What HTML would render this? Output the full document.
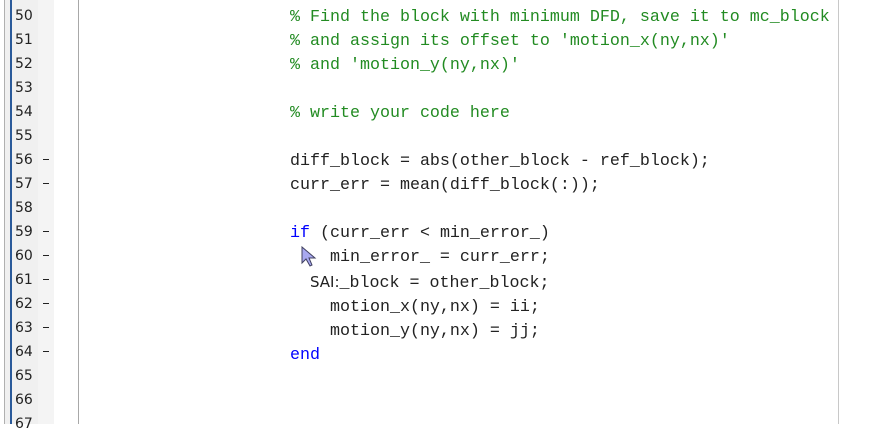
<!DOCTYPE html>
<html><head><style>
body{margin:0;width:893px;height:424px;overflow:hidden;background:#fff;position:relative;font-family:"Liberation Mono",monospace}
.g1{position:absolute;left:4px;top:0;width:34px;height:424px;background:#f0f0f0;border-left:1px solid #b0b0b0}
.g2{position:absolute;left:38px;top:0;width:16px;height:424px;background:#f4f4f4}
.blue{position:absolute;left:10px;top:0;width:2px;height:424px;background:#2a5a9a}
.vl{position:absolute;left:78px;top:0;width:1px;height:424px;background:#a8a8a8}
.vr{position:absolute;left:838px;top:0;width:1px;height:424px;background:#c8c8c8}
.n{position:absolute;left:15px;font:14px "DejaVu Sans",sans-serif;color:#222}
.d{position:absolute;left:43px;width:6px;height:1px;background:#222}
.c{position:absolute;left:290px;font-size:16.67px;white-space:pre;color:#222;line-height:24px}
.cm{color:#228b22}.k{color:#0000ff}
</style></head><body>
<div class="g1"></div><div class="g2"></div><div class="blue"></div><div class="vl"></div><div class="vr"></div>
<div class="n" style="top:8px">50</div><div class="n" style="top:32px">51</div><div class="n" style="top:56px">52</div><div class="n" style="top:80px">53</div><div class="n" style="top:104px">54</div><div class="n" style="top:128px">55</div><div class="n" style="top:152px">56</div><div class="n" style="top:176px">57</div><div class="n" style="top:200px">58</div><div class="n" style="top:224px">59</div><div class="n" style="top:248px">60</div><div class="n" style="top:272px">61</div><div class="n" style="top:296px">62</div><div class="n" style="top:320px">63</div><div class="n" style="top:344px">64</div><div class="n" style="top:368px">65</div><div class="n" style="top:392px">66</div><div class="n" style="top:416px">67</div>
<div class="d" style="top:159px"></div><div class="d" style="top:183px"></div><div class="d" style="top:231px"></div><div class="d" style="top:255px"></div><div class="d" style="top:279px"></div><div class="d" style="top:303px"></div><div class="d" style="top:327px"></div><div class="d" style="top:351px"></div>
<div class="c" style="top:6px"><span class="cm">% Find the block with minimum DFD, save it to mc_block
% and assign its offset to 'motion_x(ny,nx)'
% and 'motion_y(ny,nx)'

% write your code here</span>

diff_block = abs(other_block - ref_block);
curr_err = mean(diff_block(:));

<span class="k">if</span> (curr_err &lt; min_error_)
    min_error_ = curr_err;
  <span style="font-family:'DejaVu Sans',sans-serif;font-size:15px">SAI:</span>_block = other_block;
    motion_x(ny,nx) = ii;
    motion_y(ny,nx) = jj;
<span class="k">end</span></div>
<svg style="position:absolute;left:301px;top:246px" width="16" height="22"><path d="M1 1 L1 17 L5 13 L9 20 L11 19 L8 12 L14 12 Z" fill="#a8a8f0" stroke="#404060" stroke-width="1"/></svg>
</body></html>
